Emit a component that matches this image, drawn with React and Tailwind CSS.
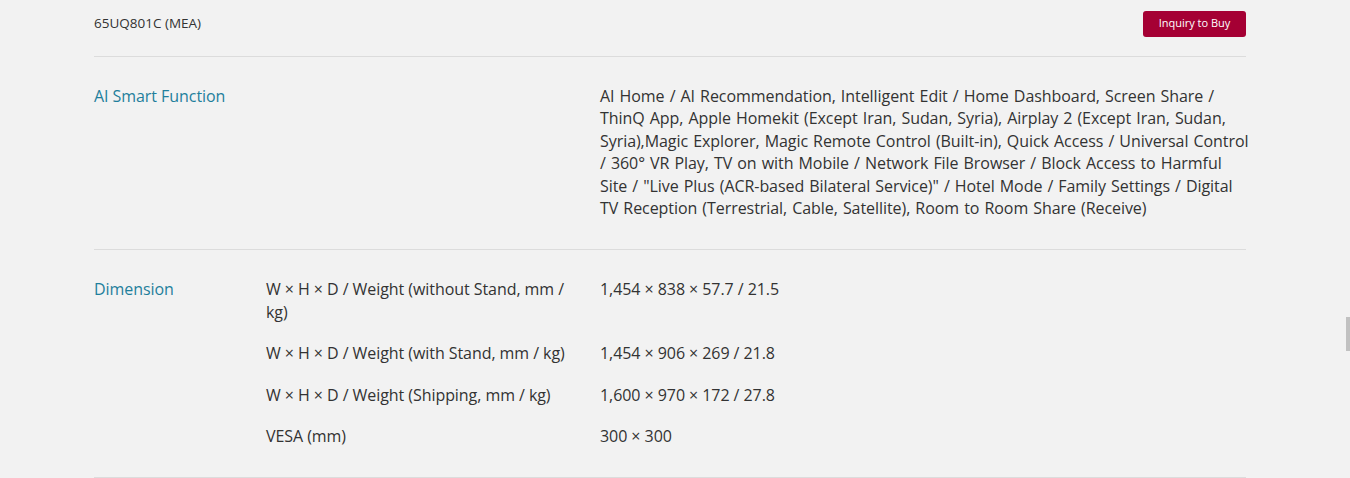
import React from 'react';

const dimensionRows = [
  { label: 'W × H × D / Weight (without Stand, mm / kg)', value: '1,454 × 838 × 57.7 / 21.5' },
  { label: 'W × H × D / Weight (with Stand, mm / kg)', value: '1,454 × 906 × 269 / 21.8' },
  { label: 'W × H × D / Weight (Shipping, mm / kg)', value: '1,600 × 970 × 172 / 27.8' },
  { label: 'VESA (mm)', value: '300 × 300' },
];

const aiText =
  'AI Home / AI Recommendation, Intelligent Edit / Home Dashboard, Screen Share / ThinQ App, Apple Homekit (Except Iran, Sudan, Syria), Airplay 2 (Except Iran, Sudan, Syria),Magic Explorer, Magic Remote Control (Built-in), Quick Access / Universal Control / 360° VR Play, TV on with Mobile / Network File Browser / Block Access to Harmful Site / "Live Plus (ACR-based Bilateral Service)" / Hotel Mode / Family Settings / Digital TV Reception (Terrestrial, Cable, Satellite), Room to Room Share (Receive)';

const App = () => {
  return (
    <div className="relative min-h-[478px] bg-[#f2f2f2] font-['Open_Sans',sans-serif] text-[#333]">
      <div className="ml-[94px] w-[1152px]">
        {/* top bar */}
        <div className="flex h-[57px] items-center justify-between border-b border-[#dcdcdc] pb-[9px]">
          <span className="text-[13.5px]">65UQ801C (MEA)</span>
          <button className="h-[26px] w-[103px] rounded-[3px] bg-[#a50034] text-[11px] text-white">
            Inquiry to Buy
          </button>
        </div>

        {/* AI Smart Function */}
        <div className="flex border-b border-[#dcdcdc] pt-[28px] pb-[30px] text-[16px] leading-[22.4px] tracking-[-0.06px]">
          <div className="w-[172px] text-[#1f7f9c]">AI Smart Function</div>
          <div className="w-[334px]" />
          <div className="-mr-[4px] w-[650px] [word-spacing:1px]">{aiText}</div>
        </div>

        {/* Dimension */}
        <div className="flex border-b border-[#dcdcdc] pt-[28px] pb-[30px] text-[16px] leading-[22.4px] tracking-[-0.06px]">
          <div className="w-[172px] text-[#1f7f9c]">Dimension</div>
          <div className="flex w-[980px] flex-col gap-[19px]">
            {dimensionRows.map((row) => (
              <div key={row.label} className="flex">
                <div className="w-[334px] pr-[16px]">{row.label}</div>
                <div className="w-[646px]">{row.value}</div>
              </div>
            ))}
          </div>
        </div>
      </div>

      {/* scrollbar thumb */}
      <div className="absolute top-[317px] right-0 h-[34px] w-[4px] bg-[#c1c1c1]" />
    </div>
  );
};

export default App;
